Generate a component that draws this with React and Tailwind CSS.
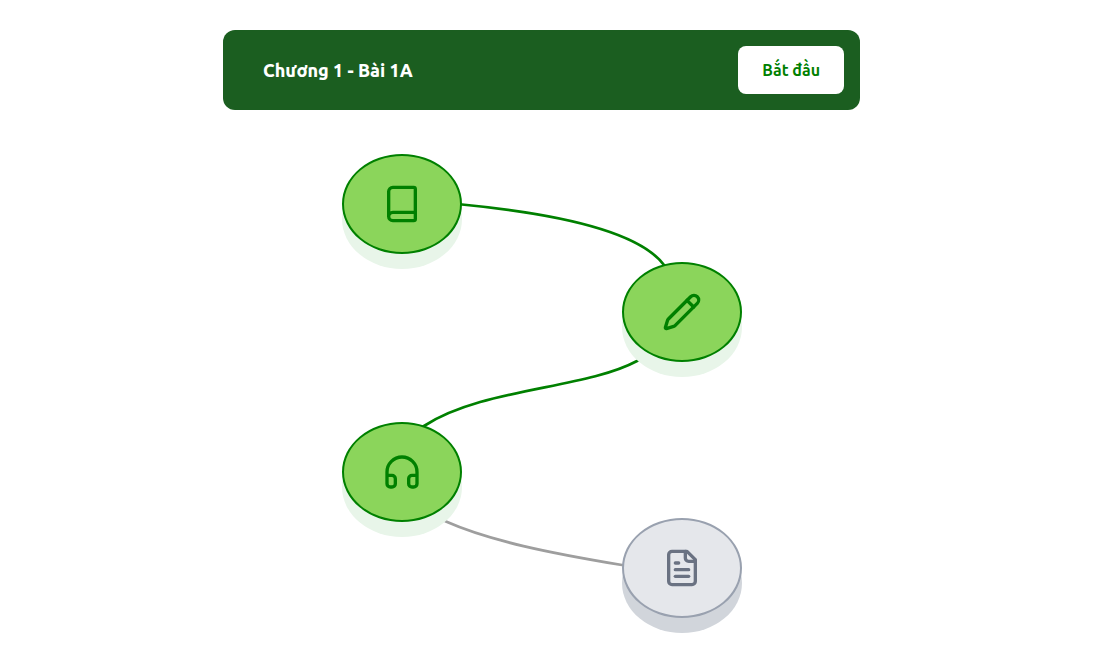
import { Book, Headphones, Pencil } from "lucide-react";

function Page({ size }) {
  return (
    <svg
      width={size}
      height={size}
      viewBox="0 0 24 24"
      fill="none"
      stroke="currentColor"
      strokeWidth="2"
      strokeLinecap="round"
      strokeLinejoin="round"
      aria-hidden="true"
    >
      <path d="M15 2H6a2 2 0 0 0-2 2v16a2 2 0 0 0 2 2h12a2 2 0 0 0 2-2V7Z" />
      <path d="M14 2v4a2 2 0 0 0 2 2h4" />
      <path d="M10 9H8" />
      <path d="M16 13H8" />
      <path d="M16 17H8" />
    </svg>
  );
}

const steps = [
  { id: "book", Icon: Book, place: "left-0 top-0", done: true },
  { id: "pencil", Icon: Pencil, place: "right-0 top-[108px]", done: true },
  { id: "headphones", Icon: Headphones, place: "left-0 top-[268px]", done: true },
  { id: "page", Icon: Page, place: "right-0 top-[364px]", done: false },
];

function Step({ label, Icon, place, done }) {
  const tone = done
    ? "border-[#008000] bg-[#8bd55b] text-[#008000] shadow-[0_15px_0_#e8f5e9]"
    : "border-gray-400 bg-gray-200 text-gray-500 shadow-[0_15px_0_#d1d5db]";
  return (
    <button
      type="button"
      aria-label={label}
      disabled={!done}
      className={`absolute flex h-[100px] w-[120px] items-center justify-center rounded-[50%] border-2 ${place} ${tone}`}
    >
      <Icon size={40} />
    </button>
  );
}

export default function App() {
  return (
    <main className="bg-white px-4 py-[30px] pr-[33px] font-['Ubuntu','Noto_Sans',sans-serif]">
      <header className="mx-auto flex max-w-[637px] items-center justify-between rounded-xl bg-[#1b5e20] py-4 pr-4 pl-10">
        <h1 className="text-lg font-extrabold text-white">Chương 1 - Bài 1A</h1>
        <button type="button" className="h-12 rounded-lg bg-white px-6 font-bold text-[#008000]">
          Bắt đầu
        </button>
      </header>

      <section className="relative mx-auto mt-11 h-[479px] w-[400px]">
        <svg
          className="absolute inset-0 h-full w-full"
          viewBox="0 0 400 479"
          fill="none"
          strokeWidth="2.7"
          aria-hidden="true"
        >
          <path d="M110 49.5L120 50.5C208 59 296 76 322 111L326 116" stroke="#008000" />
          <path d="M301 203L295 207C243 235 140 234 82 272L76 276" stroke="#008000" />
          <path d="M96 363L104 367.5C148 387 208 399 280 411L290 413" stroke="#9e9e9e" />
        </svg>
        {steps.map(({ id, ...step }, index) => (
          <Step key={id} label={`Bước ${index + 1}`} {...step} />
        ))}
      </section>
    </main>
  );
}
